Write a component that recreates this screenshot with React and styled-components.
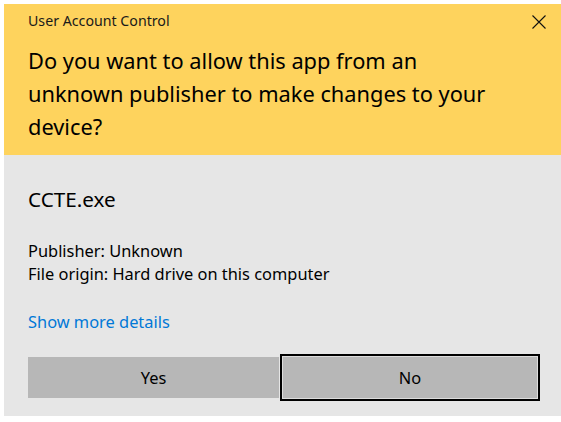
import React from "react";
import styled, { createGlobalStyle } from "styled-components";

const GlobalStyle = createGlobalStyle`
  html, body { margin: 0; padding: 0; background: #ffffff; }
  body { font-family: "Noto Sans", "Open Sans", Arial, sans-serif; color: #000; }
`;

const Page = styled.div`
  padding: 4px 0 0 4px;
`;

const Dialog = styled.div`
  width: 557px;
  display: flex;
  flex-direction: column;
`;

const Header = styled.div`
  background: #fed35d;
  padding: 6px 0 12px 24px;
  display: flex;
  flex-direction: column;
`;

const TitleRow = styled.div`
  display: flex;
  align-items: flex-start;
  justify-content: space-between;
  height: 20px;
`;

const Title = styled.div`
  font-size: 14.2px;
  line-height: 21px;
  color: #1a1a1a;
`;

const CloseButton = styled.button`
  border: 0;
  background: transparent;
  padding: 0;
  margin: 5px 15px 0 0;
  width: 14px;
  height: 14px;
  display: flex;
  align-items: center;
  justify-content: center;
`;

const Heading = styled.div`
  margin-top: 14px;
  font-size: 21.8px;
  line-height: 33px;
  color: #000;
`;

const Body = styled.div`
  background: #e6e6e6;
  padding: 30px 0 17px 24px;
  display: flex;
  flex-direction: column;
  height: 261px;
  box-sizing: border-box;
`;

const FileName = styled.div`
  font-size: 20.7px;
  line-height: 28px;
`;

const Meta = styled.div`
  margin-top: 26px;
  font-size: 16.4px;
  line-height: 23px;
  color: #000;
`;

const Link = styled.a`
  margin-top: 26px;
  font-size: 16.4px;
  line-height: 22px;
  color: #0078d7;
  text-decoration: none;
  cursor: pointer;
`;

const ButtonRow = styled.div`
  margin-top: 24px;
  width: 509px;
  display: grid;
  grid-template-columns: 251px 254px;
  column-gap: 4px;
`;

const Button = styled.button`
  height: 41px;
  border: 0;
  background: #b7b7b7;
  font-family: inherit;
  font-size: 16.4px;
  color: #000;
  padding: 0;
  box-shadow: ${(p) => (p.$focused ? "0 0 0 1px #dcdcdc, 0 0 0 3px #000" : "none")};
`;

const CloseIcon = () => (
  <svg width="14" height="14" viewBox="0 0 14 14">
    <path d="M0.5 0.5 L13.5 13.5 M13.5 0.5 L0.5 13.5" stroke="#111" strokeWidth="1.1" fill="none" />
  </svg>
);

export default function App() {
  return (
    <Page>
      <GlobalStyle />
      <Dialog>
        <Header>
          <TitleRow>
            <Title>User Account Control</Title>
            <CloseButton aria-label="Close">
              <CloseIcon />
            </CloseButton>
          </TitleRow>
          <Heading>
            Do you want to allow this app from an
            <br />
            unknown publisher to make changes to your
            <br />
            device?
          </Heading>
        </Header>
        <Body>
          <FileName>CCTE.exe</FileName>
          <Meta>
            Publisher: Unknown
            <br />
            File origin: Hard drive on this computer
          </Meta>
          <Link>Show more details</Link>
          <ButtonRow>
            <Button>Yes</Button>
            <Button $focused>No</Button>
          </ButtonRow>
        </Body>
      </Dialog>
    </Page>
  );
}
